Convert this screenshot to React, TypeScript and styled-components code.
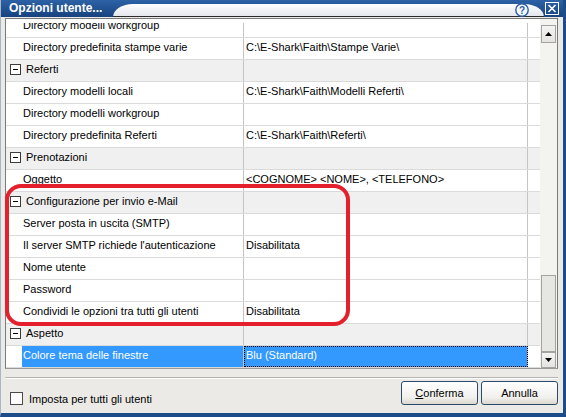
import React from 'react';
import styled, {createGlobalStyle} from 'styled-components';

const GlobalStyle = createGlobalStyle`
  html, body {
    margin: 0;
    padding: 0;
    background: #ffffff;
  }
  * {
    box-sizing: border-box;
  }
`;

const Window = styled.div`
  position: relative;
  width: 566px;
  height: 417px;
  display: flex;
  flex-direction: column;
  background: #ebeae6;
  border-left: 1px solid #a9b6c8;
  border-right: 3px solid #1d4c8a;
  border-bottom: 4px solid #1d4c8a;
  font-family: "Liberation Sans", Arial, sans-serif;
  font-size: 11px;
  color: #000000;
  overflow: hidden;
`;

const TitleBar = styled.div`
  height: 17px;
  display: flex;
  background: linear-gradient(#2d62a6, #17437f);
`;

const TitleTab = styled.div`
  width: 112px;
  padding-left: 8px;
  color: #ffffff;
  font-weight: bold;
  font-size: 12px;
  line-height: 17px;
  white-space: nowrap;
`;

const TitleGap = styled.div`
  flex: 1;
  margin-top: 4px;
  display: flex;
  justify-content: flex-end;
  align-items: center;
  padding-right: 14px;
  background: linear-gradient(#ffffff, #e3e6ec);
  border-top-left-radius: 20px 13px;
  border-top-right-radius: 20px 13px;
  border-bottom: 1px solid #2b2b2b;
`;

const CloseBox = styled.div`
  width: 19px;
  display: flex;
  align-items: center;
  justify-content: flex-start;
  padding-left: 1px;
`;

const Body = styled.div`
  flex: 1;
  display: flex;
  flex-direction: column;
  padding: 1px 5px 0 4px;
`;

const Grid = styled.div`
  display: flex;
  height: 351px;
  border: 1px solid #7a7a7a;
  border-bottom: 1px solid #9a9a9a;
  background: #ffffff;
`;

const Viewport = styled.div`
  flex: 1;
  margin-top: 4px;
  overflow: hidden;
`;

const RowList = styled.div`
  margin-top: -7px;
`;

const Row = styled.div<{$category?: boolean}>`
  display: flex;
  height: 22px;
  border-bottom: 1px solid #dadada;
  background: ${p => (p.$category ? '#f0f0f0' : '#ffffff')};
`;

const Gutter = styled.div`
  width: 16px;
  display: flex;
  align-items: flex-start;
  justify-content: flex-end;
  padding: 4px 1px 0 0;
`;

const Toggle = styled.div`
  width: 11px;
  height: 11px;
  border: 1px solid #3c3c3c;
  background: #ffffff;
  display: flex;
  align-items: center;
  justify-content: center;
  &::after {
    content: '';
    width: 5px;
    height: 1px;
    background: #000000;
  }
`;

const NameCell = styled.div<{$selected?: boolean; $category?: boolean}>`
  width: 222px;
  padding-left: ${p => (p.$category ? '4px' : '1px')};
  line-height: 18px;
  white-space: nowrap;
  overflow: hidden;
  border-right: 1px solid #c4c4c4;
  background: ${p => (p.$selected ? '#3399ff' : 'transparent')};
  color: ${p => (p.$selected ? '#ffffff' : '#000000')};
`;

const ValueCell = styled.div<{$selected?: boolean}>`
  width: 284px;
  padding-left: 2px;
  line-height: 18px;
  white-space: nowrap;
  overflow: hidden;
  border-right: 1px solid #c4c4c4;
  background: ${p => (p.$selected ? '#3399ff' : 'transparent')};
  color: ${p => (p.$selected ? '#ffffff' : '#000000')};
  outline: ${p => (p.$selected ? '1px dotted #000000' : 'none')};
  outline-offset: -1px;
`;

const Tail = styled.div`
  flex: 1;
`;

const ScrollBar = styled.div`
  width: 17px;
  display: flex;
  flex-direction: column;
  padding: 6px 1px 0 1px;
  background: #f3f3ef;
`;

const ScrollButton = styled.div<{$h: number}>`
  height: ${p => p.$h}px;
  display: flex;
  align-items: center;
  justify-content: center;
  border: 1px solid #a3a3a3;
  background: linear-gradient(#f4f4f2, #e4e3df);
`;

const Track = styled.div`
  flex: 1;
`;

const Thumb = styled.div`
  height: 77px;
  border: 1px solid #a3a3a3;
  background: #e6e6e3;
`;

const Footer = styled.div`
  flex: 1;
  display: flex;
  align-items: flex-start;
  margin-top: 8px;
  border-top: 1px solid #b4b4b0;
  box-shadow: inset 0 1px 0 #ffffff;
  padding: 3px 0 0 5px;
`;

const CheckLabel = styled.label`
  display: flex;
  align-items: center;
  gap: 6px;
  margin-top: 11px;
  flex: 1;
`;

const CheckBox = styled.span`
  width: 13px;
  height: 13px;
  border: 1px solid #4a4a4a;
  background: #ffffff;
`;

const Buttons = styled.div`
  display: flex;
  gap: 3px;
`;

const Button = styled.button`
  width: 77px;
  height: 24px;
  border: 1px solid #2c4a6e;
  border-radius: 3px;
  background: linear-gradient(#ffffff, #f1f0ec 70%, #dcd8cf);
  font-family: "Liberation Sans", Arial, sans-serif;
  font-size: 11px;
  color: #000000;
  padding: 0;
  u {
    text-decoration: underline;
  }
`;

const Highlight = styled.div`
  position: absolute;
  left: 4px;
  top: 184px;
  width: 345px;
  height: 142px;
  border: 4px solid #e3202b;
  border-radius: 16px;
  pointer-events: none;
`;

type Item = {name: string; value?: string; category?: boolean; selected?: boolean};

const items: Item[] = [
  {name: 'Directory modelli workgroup'},
  {name: 'Directory predefinita stampe varie', value: 'C:\\E-Shark\\Faith\\Stampe Varie\\'},
  {name: 'Referti', category: true},
  {name: 'Directory modelli locali', value: 'C:\\E-Shark\\Faith\\Modelli Referti\\'},
  {name: 'Directory modelli workgroup'},
  {name: 'Directory predefinita Referti', value: 'C:\\E-Shark\\Faith\\Referti\\'},
  {name: 'Prenotazioni', category: true},
  {name: 'Oggetto', value: '<COGNOME> <NOME>, <TELEFONO>'},
  {name: 'Configurazione per invio e-Mail', category: true},
  {name: 'Server posta in uscita (SMTP)'},
  {name: "Il server SMTP richiede l'autenticazione", value: 'Disabilitata'},
  {name: 'Nome utente'},
  {name: 'Password'},
  {name: 'Condividi le opzioni tra tutti gli utenti', value: 'Disabilitata'},
  {name: 'Aspetto', category: true},
  {name: 'Colore tema delle finestre', value: 'Blu (Standard)', selected: true},
];

const HelpIcon = () => (
  <svg width="16" height="14" viewBox="0 0 16 14">
    <circle cx="8" cy="7" r="6.2" fill="#f4f7fc" stroke="#2e5fa8" strokeWidth="1.4" />
    <text x="8" y="10.8" textAnchor="middle" fontSize="10" fontWeight="bold" fill="#2e5fa8" fontFamily="Liberation Sans, Arial, sans-serif">?</text>
  </svg>
);

const CloseIcon = () => (
  <svg width="14" height="13" viewBox="0 0 14 13">
    <rect x="0.5" y="0.5" width="13" height="12" fill="none" stroke="#ffffff" strokeWidth="1" />
    <path d="M3.5 3 L10.5 10 M10.5 3 L3.5 10" stroke="#ffffff" strokeWidth="1.6" />
  </svg>
);

const Arrow = ({up}: {up?: boolean}) => (
  <svg width="7" height="4" viewBox="0 0 7 4">
    <path d={up ? 'M0 4 L3.5 0 L7 4 Z' : 'M0 0 L7 0 L3.5 4 Z'} fill="#000000" />
  </svg>
);

const App = () => {
  return (
    <>
      <GlobalStyle />
      <Window>
        <TitleBar>
          <TitleTab>Opzioni utente...</TitleTab>
          <TitleGap>
            <HelpIcon />
          </TitleGap>
          <CloseBox>
            <CloseIcon />
          </CloseBox>
        </TitleBar>
        <Body>
          <Grid>
            <Viewport>
              <RowList>
                {items.map((it, i) => (
                  <Row key={i} $category={it.category}>
                    <Gutter>{it.category && <Toggle />}</Gutter>
                    <NameCell $selected={it.selected} $category={it.category}>{it.name}</NameCell>
                    <ValueCell $selected={it.selected}>{it.value}</ValueCell>
                    <Tail />
                  </Row>
                ))}
              </RowList>
            </Viewport>
            <ScrollBar>
              <ScrollButton $h={18}>
                <Arrow up />
              </ScrollButton>
              <Track />
              <Thumb />
              <ScrollButton $h={16}>
                <Arrow />
              </ScrollButton>
            </ScrollBar>
          </Grid>
          <Footer>
            <CheckLabel>
              <CheckBox />
              Imposta per tutti gli utenti
            </CheckLabel>
            <Buttons>
              <Button>
                <u>C</u>onferma
              </Button>
              <Button>Annulla</Button>
            </Buttons>
          </Footer>
        </Body>
        <Highlight />
      </Window>
    </>
  );
};

export default App;
